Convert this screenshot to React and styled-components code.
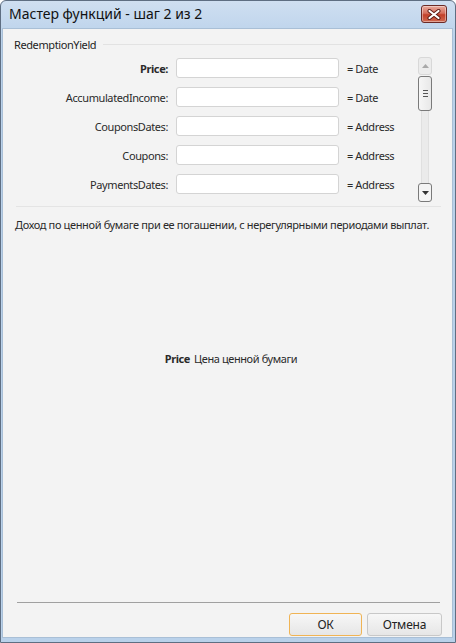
import styled, { createGlobalStyle } from "styled-components";

const Global = createGlobalStyle`
	html, body {
		margin: 0;
		padding: 0;
		background: #fff;
	}
	body {
		font-family: "Noto Sans", "Open Sans", sans-serif;
		font-size: 11px;
		letter-spacing: -0.4px;
		color: #1e1e1e;
	}
`;

const params = [
	{ name: "Price", type: "= Date", bold: true },
	{ name: "AccumulatedIncome", type: "= Date" },
	{ name: "CouponsDates", type: "= Address" },
	{ name: "Coupons", type: "= Address" },
	{ name: "PaymentsDates", type: "= Address" },
];

export default function App() {
	return (
		<>
			<Global />
			<Window>
				<TitleBar>
					<Title>Мастер функций - шаг 2 из 2</Title>
					<CloseButton>
						<svg width="14" height="11" viewBox="0 0 14 11">
							<path
								d="M2.5 2 L11.5 9 M11.5 2 L2.5 9"
								stroke="#5a1a14"
								strokeWidth="4"
								strokeLinecap="round"
							/>
							<path
								d="M2.5 2 L11.5 9 M11.5 2 L2.5 9"
								stroke="#fff"
								strokeWidth="2.2"
								strokeLinecap="round"
							/>
						</svg>
					</CloseButton>
				</TitleBar>
				<Client>
					<GroupHeader>
						<span>RedemptionYield</span>
						<HeaderLine />
					</GroupHeader>
					<ParamsArea>
						<ParamsList>
							{params.map((p) => (
								<ParamRow key={p.name}>
									<ParamLabel $bold={p.bold}>{p.name}:</ParamLabel>
									<ParamInput />
									<ParamType>{p.type}</ParamType>
								</ParamRow>
							))}
						</ParamsList>
						<ScrollBar>
							<ScrollArrow $disabled>
								<svg width="7" height="4" viewBox="0 0 7 4">
									<path d="M0 4 L3.5 0 L7 4 Z" fill="#a8a8a8" />
								</svg>
							</ScrollArrow>
							<Thumb>
								<Grip />
								<Grip />
								<Grip />
							</Thumb>
							<Track />
							<ScrollArrow>
								<svg width="7" height="4" viewBox="0 0 7 4">
									<path d="M0 0 L7 0 L3.5 4 Z" fill="#333" />
								</svg>
							</ScrollArrow>
						</ScrollBar>
					</ParamsArea>
					<Separator />
					<Description>
						Доход по ценной бумаге при ее погашении, с нерегулярными периодами
						выплат.
					</Description>
					<ParamHelp>
						<b>Price</b> Цена ценной бумаги
					</ParamHelp>
					<BottomLine />
					<Buttons>
						<Button $default>ОК</Button>
						<Button>Отмена</Button>
					</Buttons>
				</Client>
			</Window>
		</>
	);
}

const Window = styled.div`
	box-sizing: border-box;
	width: 456px;
	height: 643px;
	display: flex;
	flex-direction: column;
	border: 1px solid #5e6e82;
	border-radius: 6px 6px 0 0;
	background: linear-gradient(#cfdff1, #b9d1ea 40px, #b9d1ea);
	padding: 0 2px 4px 1px;
`;

const TitleBar = styled.div`
	height: 27px;
	display: flex;
	align-items: flex-start;
	justify-content: space-between;
	padding: 0 6px 0 7px;
	flex-shrink: 0;
`;

const Title = styled.div`
	font-size: 14px;
	letter-spacing: 0;
	line-height: 27px;
	color: #111;
	margin-top: -1px;
`;

const CloseButton = styled.div`
	box-sizing: border-box;
	width: 26px;
	height: 18px;
	margin-top: 4px;
	display: flex;
	align-items: center;
	justify-content: center;
	border: 1px solid #6b2a26;
	border-radius: 3px;
	background: linear-gradient(#e9a99c, #d5705e 45%, #c2402a 55%, #d06a52);
	box-shadow: inset 0 0 0 1px rgba(255, 255, 255, 0.4);
`;

const Client = styled.div`
	flex: 1;
	display: flex;
	flex-direction: column;
	background: #f3f3f3;
	border: 1px solid #a9bfd6;
	padding: 0 10px 0 11px;
`;

const GroupHeader = styled.div`
	display: flex;
	align-items: center;
	gap: 7px;
	height: 30px;
`;

const HeaderLine = styled.div`
	flex: 1;
	height: 1px;
	background: #e2e2e2;
	margin-right: 2px;
`;

const ParamsArea = styled.div`
	display: flex;
	height: 145px;
	margin-top: -2px;
`;

const ParamsList = styled.div`
	flex: 1;
	display: flex;
	flex-direction: column;
	gap: 9px;
	padding-top: 1px;
`;

const ParamRow = styled.div`
	display: grid;
	grid-template-columns: 154px 164px auto;
	align-items: center;
	column-gap: 7px;
	height: 20px;
`;

const ParamLabel = styled.div`
	text-align: right;
	font-weight: ${(p) => (p.$bold ? 700 : 400)};
	color: #2a2a2a;
`;

const ParamInput = styled.div`
	box-sizing: border-box;
	height: 20px;
	margin-left: 1px;
	background: #fff;
	border: 1px solid #d4d4d4;
	border-radius: 3px;
`;

const ParamType = styled.div`
	color: #2a2a2a;
	padding-left: 1px;
`;

const ScrollBar = styled.div`
	width: 14px;
	margin-right: 10px;
	display: flex;
	flex-direction: column;
	align-items: center;
`;

const ScrollArrow = styled.div`
	box-sizing: border-box;
	width: 14px;
	height: ${(p) => (p.$disabled ? "18px" : "19px")};
	display: flex;
	align-items: center;
	justify-content: center;
	border: 1px solid ${(p) => (p.$disabled ? "#d8d8d8" : "#7a7a7a")};
	border-radius: 3px;
	background: ${(p) => (p.$disabled ? "#ececec" : "#f4f4f4")};
`;

const Thumb = styled.div`
	box-sizing: border-box;
	width: 14px;
	height: 35px;
	margin-top: 1px;
	display: flex;
	flex-direction: column;
	align-items: center;
	justify-content: center;
	gap: 2px;
	border: 1px solid #7a7a7a;
	border-radius: 3px;
	background: linear-gradient(90deg, #f6f6f6, #e8e8e8);
`;

const Grip = styled.div`
	width: 5px;
	height: 1px;
	background: #555;
`;

const Track = styled.div`
	flex: 1;
	width: 6px;
	background: #ebebeb;
	border-left: 1px solid #e0e0e0;
	border-right: 1px solid #e0e0e0;
`;

const Separator = styled.div`
	height: 1px;
	background: #e4e4e4;
	margin: 4px 1px 0 2px;
`;

const Description = styled.div`
	margin-top: 10px;
	padding-left: 1px;
	letter-spacing: -0.35px;
	color: #2a2a2a;
	white-space: nowrap;
`;

const ParamHelp = styled.div`
	flex: 1;
	display: flex;
	justify-content: center;
	gap: 4px;
	padding: 119px 0 0 6px;
	color: #2a2a2a;
	b {
		font-weight: 700;
	}
`;

const BottomLine = styled.div`
	height: 1px;
	background: #a0a0a0;
	margin: 0 2px 0 3px;
`;

const Buttons = styled.div`
	display: flex;
	justify-content: flex-end;
	gap: 5px;
	padding: 10px 0 1px;
`;

const Button = styled.div`
	box-sizing: border-box;
	width: ${(p) => (p.$default ? "73px" : "75px")};
	height: 23px;
	display: flex;
	align-items: center;
	justify-content: center;
	border: 1px solid ${(p) => (p.$default ? "#f0b455" : "#c8c8c8")};
	border-radius: 3px;
	background: linear-gradient(#f7f7f7, #e6e6e6);
	color: #222;
	font-size: 12px;
	letter-spacing: -0.2px;
`;
